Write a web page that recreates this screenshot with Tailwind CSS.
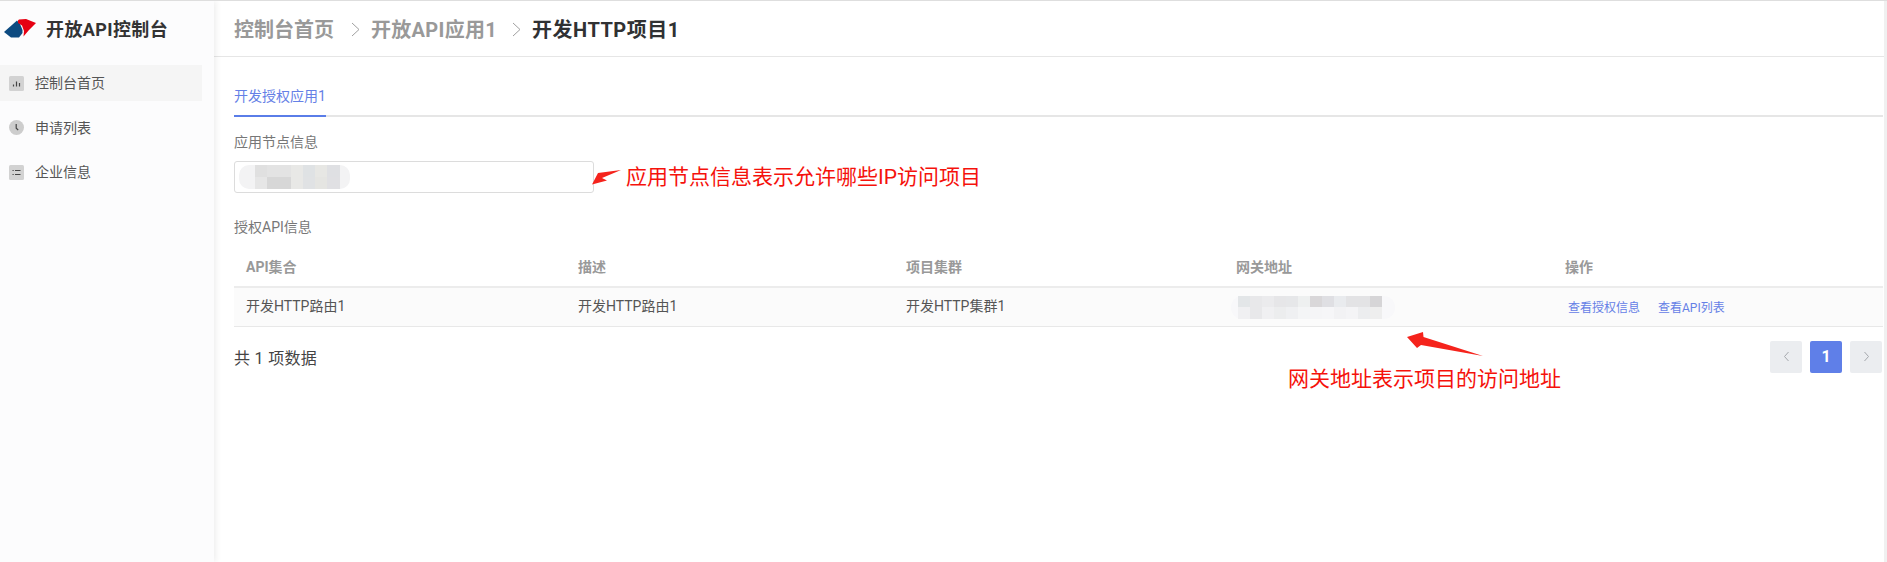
<!DOCTYPE html>
<html lang="zh-CN">
<head>
    <meta charset="UTF-8">
    <title>开放API控制台</title>
    <script src="https://cdn.jsdelivr.net/npm/@tailwindcss/browser@4"></script>
</head>
<body class="bg-white">
    <div class="relative flex h-[562px] w-[1887px] overflow-hidden border-t border-[#dedede] pr-[3px] font-['Roboto','Noto_Sans_CJK_SC',sans-serif]">
        <!-- Sidebar -->
        <aside class="z-10 h-full w-[214px] shrink-0 bg-[#fcfcfd] shadow-[2px_0_6px_rgba(0,0,0,0.07)]">
            <div class="flex h-[64px] items-center">
                <svg class="ml-[3px] mt-[-9px]" width="36" height="24" viewBox="3 17 36 24">
                    <polygon points="4,32 17,20.5 20,24 22.5,30 22.5,33 19,37.5 11,37.5" fill="#0c4a80"/>
                    <polygon points="18,20.5 19,19.5 26,19 36,23 29,30 23.5,36.5 24,31 22,25.5 18,23" fill="#e60012"/>
                </svg>
                <span class="ml-[7px] mt-[-6px] text-[18px] font-bold leading-none tracking-[0.4px] text-[#333]">开放API控制台</span>
            </div>
            <nav class="flex flex-col gap-[8.5px] text-[14px] text-[#555]">
                <a class="flex h-[36px] w-[202px] items-center gap-[11px] bg-[#f5f5f5] pl-[9px]">
                    <svg width="15" height="15" viewBox="0 0 15 15"><rect width="15" height="15" rx="1.5" fill="#d2d2d2"/><path d="M4.5 8.5v2M7.5 5.5v5M10.5 7v3.5" stroke="#444" stroke-width="1.2" fill="none"/></svg>
                    <span>控制台首页</span>
                </a>
                <a class="flex h-[36px] w-[202px] items-center gap-[11px] pl-[9px]">
                    <svg width="15" height="15" viewBox="0 0 15 15"><circle cx="7.5" cy="7.5" r="7.5" fill="#cdcdcd"/><path d="M7.2 4v4.2L9.2 10" stroke="#444" stroke-width="1.2" fill="none"/></svg>
                    <span class="pt-[1px]">申请列表</span>
                </a>
                <a class="flex h-[36px] w-[202px] items-center gap-[11px] pl-[9px]">
                    <svg width="15" height="15" viewBox="0 0 15 15"><rect width="15" height="15" rx="1.5" fill="#d2d2d2"/><path d="M3.5 5.5h1.2M3.5 9.5h1.2M6 5.5h5.5M6 9.5h5.5" stroke="#444" stroke-width="1.2" fill="none"/></svg>
                    <span>企业信息</span>
                </a>
            </nav>
        </aside>

        <!-- Main -->
        <main class="min-w-0 flex-1">
            <header class="flex h-[56px] items-center gap-[17px] border-b border-[#e6e6e6] pl-[20px] pt-[2px] text-[20px] font-bold text-[#999]">
                <span>控制台首页</span>
                <svg class="mr-[-6px]" width="9" height="15" viewBox="0 0 9 15"><path d="M1 1l7 6.5L1 14" stroke="#a0a0a0" stroke-width="1" fill="none"/></svg>
                <span class="mr-[-2px] tracking-[0.3px]">开放API应用1</span>
                <svg width="9" height="15" viewBox="0 0 9 15"><path d="M1 1l7 6.5L1 14" stroke="#a0a0a0" stroke-width="1" fill="none"/></svg>
                <span class="ml-[-6px] tracking-[0.5px] text-[#303133]">开发HTTP项目1</span>
            </header>

            <div class="pl-[20px] pr-[1px]">
                <div class="mt-[29px] border-b-[2px] border-[#e6e6e6]">
                    <div class="mb-[-2px] w-[92px] border-b-[2px] border-[#5a7de8] pb-[8px] text-[14px] leading-[21px] text-[#6580e6]">开发授权应用1</div>
                </div>

                <div class="mt-[15px] text-[14px] leading-[20px] text-[#777]">应用节点信息</div>
                <div class="mt-[9px] flex h-[32px] w-[360px] items-center rounded-[3px] border border-[#dcdcdc] pl-[4px]">
                    <svg width="111" height="24" viewBox="0 0 111 24">
                        <rect width="111" height="24" rx="10" fill="#f3f3f4"/>
                        <rect x="16" width="12" height="12" fill="#e0e0e0"/><rect x="28" width="24" height="12" fill="#e3e3e3"/><rect x="52" width="12" height="12" fill="#e8e8e6"/><rect x="64" width="12" height="12" fill="#dfe2e4"/><rect x="76" width="12" height="12" fill="#e7e7e4"/><rect x="88" width="13" height="12" fill="#dfe0e3"/>
                        <rect x="16" y="12" width="12" height="12" fill="#e6e6e6"/><rect x="28" y="12" width="24" height="12" fill="#d7d7d7"/><rect x="52" y="12" width="12" height="12" fill="#e8e8e6"/><rect x="64" y="12" width="12" height="12" fill="#e0e2e4"/><rect x="76" y="12" width="12" height="12" fill="#e5e5e2"/><rect x="88" y="12" width="13" height="12" fill="#e0e0e3"/>
                    </svg>
                </div>

                <div class="mt-[24px] text-[14px] leading-[20px] text-[#777]">授权API信息</div>
                <table class="mt-[9px] w-full table-fixed text-left text-[14px]">
                    <thead>
                        <tr class="h-[41px] border-b-[2px] border-[#ececec] text-[#999]">
                            <th class="w-[332px] pl-[12px] pt-[2px] font-bold">API集合</th>
                            <th class="w-[328px] pl-[12px] pt-[2px] font-bold">描述</th>
                            <th class="w-[330px] pl-[12px] pt-[2px] font-bold">项目集群</th>
                            <th class="w-[329px] pl-[12px] pt-[2px] font-bold">网关地址</th>
                            <th class="pl-[12px] pt-[2px] font-bold">操作</th>
                        </tr>
                    </thead>
                    <tbody>
                        <tr class="h-[39px] border-b border-[#e8e8e8] bg-[#fbfbfb] text-[#555]">
                            <td class="pl-[12px]">开发HTTP路由1</td>
                            <td class="pl-[12px]">开发HTTP路由1</td>
                            <td class="pl-[12px]">开发HTTP集群1</td>
                            <td class="pl-[7px]">
                                <svg class="mt-[2px]" width="164" height="23" viewBox="0 0 164 23">
                                    <rect width="164" height="23" rx="11" fill="#f8f8fa"/>
                                    <rect x="7" width="12" height="11" fill="#e3e6e8"/><rect x="19" width="12" height="11" fill="#e8e8ea"/><rect x="31" width="12" height="11" fill="#ebebed"/><rect x="43" width="12" height="11" fill="#e6e6e8"/><rect x="55" width="12" height="11" fill="#e6e7e9"/><rect x="67" width="12" height="11" fill="#eef0f0"/><rect x="79" width="12" height="11" fill="#d9d7d9"/><rect x="91" width="12" height="11" fill="#dfdfe3"/><rect x="103" width="12" height="11" fill="#e9ebee"/><rect x="115" width="12" height="11" fill="#e3e3e5"/><rect x="127" width="12" height="11" fill="#e3e3e5"/><rect x="139" width="12" height="11" fill="#d6d5d7"/>
                                    <rect x="7" y="11" width="12" height="12" fill="#f0f0f2"/><rect x="19" y="11" width="12" height="12" fill="#e8e8ea"/><rect x="31" y="11" width="12" height="12" fill="#f0f0f2"/><rect x="43" y="11" width="12" height="12" fill="#ecedee"/><rect x="55" y="11" width="12" height="12" fill="#eff0f2"/><rect x="67" y="11" width="12" height="12" fill="#f4f5f6"/><rect x="79" y="11" width="12" height="12" fill="#f5f5f7"/><rect x="91" y="11" width="12" height="12" fill="#f6f6f8"/><rect x="103" y="11" width="12" height="12" fill="#f2f2f4"/><rect x="115" y="11" width="12" height="12" fill="#f4f4f6"/><rect x="127" y="11" width="12" height="12" fill="#ecedef"/><rect x="139" y="11" width="12" height="12" fill="#eeeeee"/>
                                </svg>
                            </td>
                            <td class="pl-[15px] text-[12px] text-[#6580e6]">
                                <a class="mr-[18px] inline-block pt-[3px]">查看授权信息</a><a class="inline-block pt-[3px]">查看API列表</a>
                            </td>
                        </tr>
                    </tbody>
                </table>

                <div class="mt-[14px] flex h-[32px] items-center justify-between pr-[1px]">
                    <span class="pt-[4px] text-[16px] tracking-[0.3px] text-[#444]">共 1 项数据</span>
                    <div class="flex gap-[8px]">
                        <button class="flex h-[32px] w-[32px] items-center justify-center rounded-[2px] bg-[#ebedf0]">
                            <svg width="7" height="11" viewBox="0 0 7 11"><path d="M5.5 1L1.5 5.5l4 4.5" stroke="#a5a8ad" fill="none"/></svg>
                        </button>
                        <button class="flex h-[32px] w-[32px] items-center justify-center rounded-[2px] bg-[#5f7fe8] text-[16px] font-bold text-white">1</button>
                        <button class="flex h-[32px] w-[32px] items-center justify-center rounded-[2px] bg-[#ebedf0]">
                            <svg width="7" height="11" viewBox="0 0 7 11"><path d="M1.5 1l4 4.5L1.5 10" stroke="#a5a8ad" fill="none"/></svg>
                        </button>
                    </div>
                </div>
            </div>
        </main>

        <!-- Right scrollbar strip -->
        <div class="absolute right-0 top-[-1px] h-[562px] w-[3px] bg-[#f0f0f0]"></div>

        <!-- Red annotations drawn over the page -->
        <svg class="absolute left-0 top-[-1px] z-20" width="1887" height="562" viewBox="0 0 1887 562">
            <polygon points="592,184.5 598,173 621,170 602,178 607,180.5" fill="#f5231c"/>
            <polygon points="1407,337 1423,332 1423.5,337 1483,356 1421,345 1417,348" fill="#f5231c"/>
        </svg>
        <span class="absolute left-[626px] top-[161px] z-20 text-[21px] leading-[30px] text-[#f5120c]">应用节点信息表示允许哪些IP访问项目</span>
        <span class="absolute left-[1288px] top-[363px] z-20 text-[21px] leading-[30px] text-[#f5120c]">网关地址表示项目的访问地址</span>
    </div>
</body>
</html>
